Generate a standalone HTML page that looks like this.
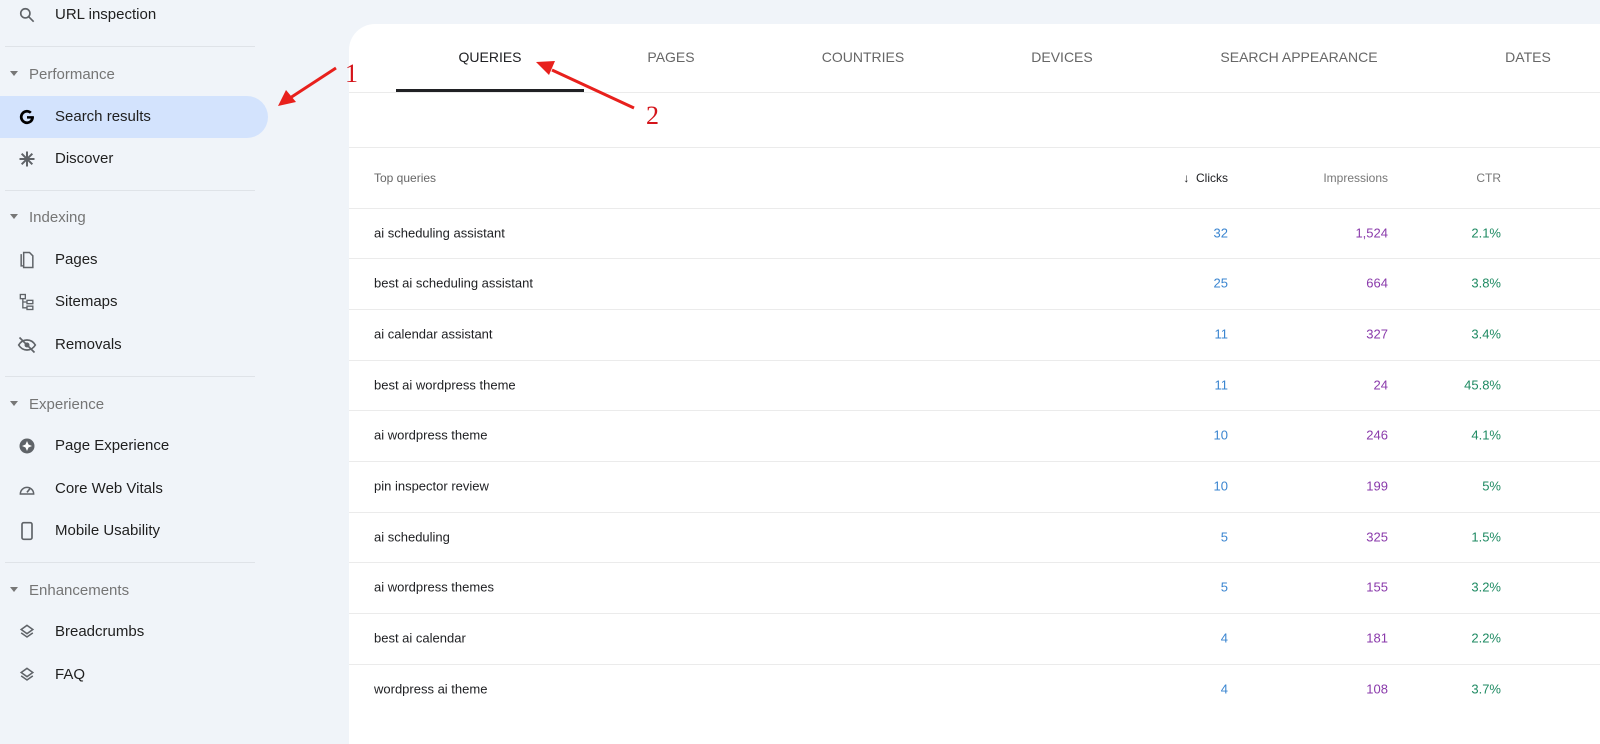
<!DOCTYPE html>
<html><head><meta charset="utf-8"><style>
*{margin:0;padding:0;box-sizing:border-box}
body{width:1600px;height:721px;overflow:hidden;background:#f0f4f9;font-family:"Liberation Sans",Arial,sans-serif;position:relative}
.it{position:absolute;left:0;width:300px;height:42px;font-size:15px;color:#1f1f1f;white-space:nowrap}
.it .ic{position:absolute;left:17px;top:11px;width:20px;height:20px}
.it span{position:absolute;left:55px;top:12px;white-space:nowrap}
.sec{position:absolute;left:0;width:300px;height:20px;font-size:15px;color:#757575}
.sec:before{content:"";position:absolute;left:10px;top:5px;border:4px solid transparent;border-top:5px solid #777}
.sec span{position:absolute;left:29px;white-space:nowrap}
.dv{position:absolute;left:5px;width:250px;height:1px;background:#dfe3e8}
.card{position:absolute;left:349px;top:24px;width:1300px;height:720px;background:#fff;border-top-left-radius:26px}
.tab{position:absolute;top:49px;font-size:14px;color:#666;transform:translateX(-50%);white-space:nowrap}
.hl{position:absolute;left:349px;width:1251px;height:1px;background:#ebebeb}
.r{position:absolute;font-size:13px;transform:translateY(-50%);white-space:nowrap}
.q{left:374px;color:#202124}
.c{right:372px;color:#3a85d0;text-align:right}
.i{right:212px;color:#8a3aab;text-align:right}
.t{right:99px;color:#1e8a62;text-align:right}
</style></head><body>
<div class="it" style="top:-6px"><svg class="ic" viewBox="0 0 24 24"><circle cx="10" cy="10" r="5.5" fill="none" stroke="#5f6368" stroke-width="2"/><path d="M14 14l6 6" stroke="#5f6368" stroke-width="2"/></svg><span>URL inspection</span></div>
<div class="dv" style="top:46px"></div>
<div class="sec" style="top:66px"><span>Performance</span></div>
<div style="position:absolute;left:0;top:96px;width:268px;height:42px;background:#d3e3fd;border-radius:0 21px 21px 0"></div>
<div class="it" style="top:96px"><svg class="ic" viewBox="0 0 24 24"><path d="M20 11h-8v3h4.6c-.6 2-2.3 3.3-4.6 3.3a5.3 5.3 0 1 1 3.5-9.3l2.2-2.2A8.5 8.5 0 1 0 20.4 12.5c0-.5 0-1-.4-1.5z" fill="#000"/></svg><span>Search results</span></div>
<div class="it" style="top:138px"><svg class="ic" viewBox="0 0 24 24"><path d="M12 3v18M3 12h18M5.6 5.6l12.8 12.8M18.4 5.6L5.6 18.4" stroke="#5f6368" stroke-width="2.4"/></svg><span>Discover</span></div>
<div class="dv" style="top:190px"></div>
<div class="sec" style="top:209px"><span>Indexing</span></div>
<div class="it" style="top:239px"><svg class="ic" viewBox="0 0 24 24"><path d="M5 5v14h2M8 3h7l4 4v14H8z" fill="none" stroke="#5f6368" stroke-width="1.8"/></svg><span>Pages</span></div>
<div class="it" style="top:281px"><svg class="ic" viewBox="0 0 24 24"><rect x="4" y="3" width="6" height="5" fill="none" stroke="#5f6368" stroke-width="1.6"/><rect x="12" y="10" width="7" height="4" fill="none" stroke="#5f6368" stroke-width="1.6"/><rect x="12" y="17" width="7" height="4" fill="none" stroke="#5f6368" stroke-width="1.6"/><path d="M7 8v11h5M7 12h5" fill="none" stroke="#5f6368" stroke-width="1.6"/></svg><span>Sitemaps</span></div>
<div class="it" style="top:324px"><svg class="ic" viewBox="0 0 24 24"><path d="M2 12c3-5 7-6 10-6s7 1 10 6c-3 5-7 6-10 6s-7-1-10-6z" fill="none" stroke="#5f6368" stroke-width="2"/><circle cx="12" cy="12" r="3" fill="#5f6368"/><path d="M3 3l18 18" stroke="#5f6368" stroke-width="2"/></svg><span>Removals</span></div>
<div class="dv" style="top:376px"></div>
<div class="sec" style="top:396px"><span>Experience</span></div>
<div class="it" style="top:425px"><svg class="ic" viewBox="0 0 24 24"><circle cx="12" cy="12" r="9" fill="#5f6368"/><path d="M12 6l1.8 4.2L18 12l-4.2 1.8L12 18l-1.8-4.2L6 12l4.2-1.8z" fill="#fff"/></svg><span>Page Experience</span></div>
<div class="it" style="top:468px"><svg class="ic" viewBox="0 0 24 24"><path d="M4 18a8 8 0 1 1 16 0z" fill="none" stroke="#5f6368" stroke-width="1.8"/><path d="M12 16l4-5" stroke="#5f6368" stroke-width="2"/></svg><span>Core Web Vitals</span></div>
<div class="it" style="top:510px"><svg class="ic" viewBox="0 0 24 24"><rect x="6" y="2" width="12" height="20" rx="2" fill="none" stroke="#5f6368" stroke-width="2"/></svg><span>Mobile Usability</span></div>
<div class="dv" style="top:562px"></div>
<div class="sec" style="top:582px"><span>Enhancements</span></div>
<div class="it" style="top:611px"><svg class="ic" viewBox="0 0 24 24"><path d="M12 4l7 5-7 5-7-5z M5 13l7 5 7-5" fill="none" stroke="#5f6368" stroke-width="1.8"/></svg><span>Breadcrumbs</span></div>
<div class="it" style="top:654px"><svg class="ic" viewBox="0 0 24 24"><path d="M12 4l7 5-7 5-7-5z M5 13l7 5 7-5" fill="none" stroke="#5f6368" stroke-width="1.8"/></svg><span>FAQ</span></div>

<div class="card"></div>
<div class="tab" style="left:490px;color:#202124">QUERIES</div>
<div class="tab" style="left:671px">PAGES</div>
<div class="tab" style="left:863px">COUNTRIES</div>
<div class="tab" style="left:1062px">DEVICES</div>
<div class="tab" style="left:1299px">SEARCH APPEARANCE</div>
<div class="tab" style="left:1528px">DATES</div>
<div style="position:absolute;left:396px;top:89px;width:188px;height:3px;background:#202124"></div>
<div class="hl" style="top:92px"></div>
<div class="hl" style="top:147px"></div>
<div class="r q" style="top:178px;font-size:12px;color:#666">Top queries</div>
<div class="r c" style="top:178px;font-size:12px;color:#202124">&#8595;&nbsp;&nbsp;Clicks</div>
<div class="r i" style="top:178px;font-size:12px;color:#777">Impressions</div>
<div class="r t" style="top:178px;font-size:12px;color:#777">CTR</div>
<div class="hl" style="top:208px"></div>
<div class="r q" style="top:233px">ai scheduling assistant</div><div class="r c" style="top:233px">32</div><div class="r i" style="top:233px">1,524</div><div class="r t" style="top:233px">2.1%</div>
<div class="hl" style="top:258px"></div>
<div class="r q" style="top:283px">best ai scheduling assistant</div><div class="r c" style="top:283px">25</div><div class="r i" style="top:283px">664</div><div class="r t" style="top:283px">3.8%</div>
<div class="hl" style="top:309px"></div>
<div class="r q" style="top:334px">ai calendar assistant</div><div class="r c" style="top:334px">11</div><div class="r i" style="top:334px">327</div><div class="r t" style="top:334px">3.4%</div>
<div class="hl" style="top:360px"></div>
<div class="r q" style="top:385px">best ai wordpress theme</div><div class="r c" style="top:385px">11</div><div class="r i" style="top:385px">24</div><div class="r t" style="top:385px">45.8%</div>
<div class="hl" style="top:410px"></div>
<div class="r q" style="top:435px">ai wordpress theme</div><div class="r c" style="top:435px">10</div><div class="r i" style="top:435px">246</div><div class="r t" style="top:435px">4.1%</div>
<div class="hl" style="top:461px"></div>
<div class="r q" style="top:486px">pin inspector review</div><div class="r c" style="top:486px">10</div><div class="r i" style="top:486px">199</div><div class="r t" style="top:486px">5%</div>
<div class="hl" style="top:512px"></div>
<div class="r q" style="top:537px">ai scheduling</div><div class="r c" style="top:537px">5</div><div class="r i" style="top:537px">325</div><div class="r t" style="top:537px">1.5%</div>
<div class="hl" style="top:562px"></div>
<div class="r q" style="top:587px">ai wordpress themes</div><div class="r c" style="top:587px">5</div><div class="r i" style="top:587px">155</div><div class="r t" style="top:587px">3.2%</div>
<div class="hl" style="top:613px"></div>
<div class="r q" style="top:638px">best ai calendar</div><div class="r c" style="top:638px">4</div><div class="r i" style="top:638px">181</div><div class="r t" style="top:638px">2.2%</div>
<div class="hl" style="top:664px"></div>
<div class="r q" style="top:689px">wordpress ai theme</div><div class="r c" style="top:689px">4</div><div class="r i" style="top:689px">108</div><div class="r t" style="top:689px">3.7%</div>

<svg style="position:absolute;left:0;top:0" width="1600" height="721">
<path d="M336 68L290 98" stroke="#e8201c" stroke-width="3"/>
<path d="M278 106l8-16 10 12z" fill="#e8201c"/>
<path d="M634 108L552 70" stroke="#e8201c" stroke-width="3"/>
<path d="M536 62l19-1-6 14z" fill="#e8201c"/>
<text x="345" y="82" font-family="Liberation Serif" font-size="26" fill="#d4141a">1</text>
<text x="646" y="124" font-family="Liberation Serif" font-size="26" fill="#d4141a">2</text>
</svg>
</body></html>
